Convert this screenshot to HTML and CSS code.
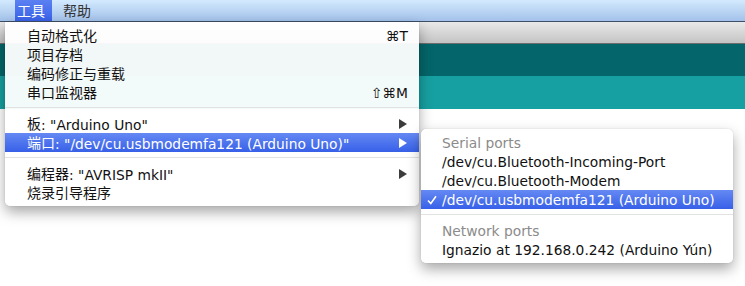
FILE: index.html
```html
<!DOCTYPE html>
<html lang="zh-CN">
<head>
    <meta charset="UTF-8">
    <title>Arduino - 工具</title>
    <link rel="stylesheet" href="styles.css">
</head>
<body>

<div class="menubar">
    <span class="mb-item active">工具</span>
    <span class="mb-item">帮助</span>
</div>

<div class="window">
    <div class="toolbar"></div>
    <div class="header"></div>
    <div class="tabs"></div>
    <div class="editor"></div>
</div>

<div class="menu main-menu">
    <div class="item"><span class="label"><span class="zh">自动格式化</span></span><span class="key">⌘T</span></div>
    <div class="item"><span class="label"><span class="zh">项目存档</span></span></div>
    <div class="item"><span class="label"><span class="zh">编码修正与重载</span></span></div>
    <div class="item"><span class="label"><span class="zh">串口监视器</span></span><span class="key">⇧⌘M</span></div>
    <div class="sep"></div>
    <div class="item"><span class="label"><span class="zh">板</span>: "Arduino Uno"</span>
        <svg class="arrow" width="8" height="10" viewBox="0 0 8 10"><polygon points="0,0 8,5 0,10"/></svg></div>
    <div class="item selected"><span class="label"><span class="zh">端口</span>: "/dev/cu.usbmodemfa121 (Arduino Uno)"</span>
        <svg class="arrow" width="8" height="10" viewBox="0 0 8 10"><polygon points="0,0 8,5 0,10"/></svg></div>
    <div class="sep"></div>
    <div class="item"><span class="label"><span class="zh">编程器</span>: "AVRISP mkII"</span>
        <svg class="arrow" width="8" height="10" viewBox="0 0 8 10"><polygon points="0,0 8,5 0,10"/></svg></div>
    <div class="item"><span class="label"><span class="zh">烧录引导程序</span></span></div>
</div>

<div class="menu submenu">
    <div class="item heading">Serial ports</div>
    <div class="item">/dev/cu.Bluetooth-Incoming-Port</div>
    <div class="item">/dev/cu.Bluetooth-Modem</div>
    <div class="item selected">
        <svg class="check" width="10" height="10" viewBox="0 0 10 10"><path d="M1 5.5 L3.8 8.5 L9 1.2" fill="none" stroke="#fff" stroke-width="1.6"/></svg>
        /dev/cu.usbmodemfa121 (Arduino Uno)</div>
    <div class="sep"></div>
    <div class="item heading">Network ports</div>
    <div class="item">Ignazio at 192.168.0.242 (Arduino Yún)</div>
</div>

</body>
</html>
```

FILE: styles.css
```css
body {
    margin: 0;
    width: 745px;
    height: 286px;
    overflow: hidden;
    background: #fff;
    font-family: "DejaVu Sans", "Noto Sans CJK SC", sans-serif;
    font-size: 13.8px;
    color: #111;
}
.zh {
    font-family: "Noto Sans CJK SC", sans-serif;
    font-size: 14px;
    position: relative;
    top: -1px;
}

/* menu bar */
.menubar {
    height: 21px;
    display: flex;
    align-items: stretch;
    padding-left: 15px;
    background: linear-gradient(#d3eafe, #a3c1ea);
    border-bottom: 1px solid #3d5068;
    font-family: "Noto Sans CJK SC", sans-serif;
    font-size: 14px;
}
.mb-item {
    display: flex;
    align-items: center;
    padding: 0 7px 2px 2px;
    margin-right: 9px;
    color: #333;
}
.mb-item.active {
    color: #fff;
    background: linear-gradient(#5a80f2, #3a62e9);
}

/* app window behind the menus */
.toolbar {
    height: 21px;
    background: linear-gradient(#e9e9e9, #c4c4c4);
    border-bottom: 1px solid #6d6d6d;
}
.header {
    height: 32px;
    background: #04666a;
}
.tabs {
    height: 33px;
    background: #17a0a1;
}
.editor {
    height: 180px;
    background: #fff;
}

/* menus */
.menu {
    position: absolute;
    background: rgba(255, 255, 255, 0.95);
    box-shadow: 0 6px 14px rgba(0, 0, 0, 0.35), 0 0 1px rgba(0, 0, 0, 0.3);
    padding: 4px 0;
}
.main-menu {
    left: 5px;
    top: 22px;
    width: 414px;
    border-radius: 0 0 5px 5px;
}
.submenu {
    left: 421px;
    top: 129px;
    width: 312px;
    border-radius: 5px;
}
.item {
    height: 19px;
    display: flex;
    align-items: center;
    padding: 0 12px 0 22px;
    white-space: nowrap;
    position: relative;
}
.submenu .item {
    padding-left: 21px;
}
.label {
    flex: 1;
}
.key {
    margin-right: -1px;
}
.arrow {
    fill: #3c3c3c;
}
.item.selected {
    color: #fff;
    background: linear-gradient(#6589f3, #3760e8);
}
.item.selected .arrow {
    fill: #fff;
}
.item.heading {
    color: #8b8b8b;
}
.check {
    position: absolute;
    left: 6px;
    top: 5px;
}
.sep {
    height: 1px;
    margin: 5px 0 6px;
    background: #e2e2e2;
}
.main-menu .sep:first-of-type {
    margin: 7px 0 4px;
}
```
